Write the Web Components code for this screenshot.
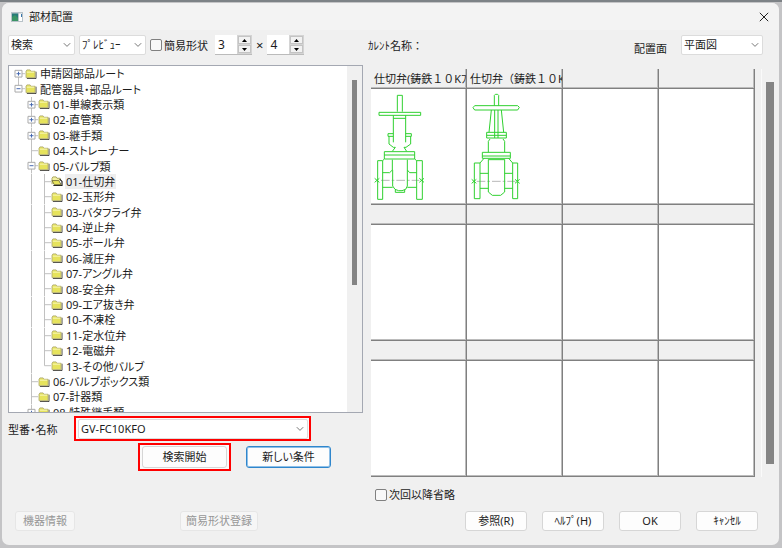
<!DOCTYPE html>
<html lang="ja">
<head>
<meta charset="utf-8">
<title>部材配置</title>
<style>
html, body { margin: 0; height: 100%; }
body {
  background: linear-gradient(#7d8286 0 2px, #c4c4c6 2px);
  font: 11px/15px "Noto Sans", "Noto Sans CJK JP", sans-serif;
  color: #1c1c1c;
  overflow: hidden;
}
</style>
</head>
<body>
<part-dialog></part-dialog>
<script>
const define = (name, html, setup) => customElements.define(name, class extends HTMLElement {
  connectedCallback() {
    if (this.shadowRoot) return;
    const root = this.attachShadow({ mode: 'open' });
    const t = document.createElement('template');
    t.innerHTML = '<style>*{box-sizing:border-box}:host{box-sizing:border-box}</style>' + html;
    root.append(t.content.cloneNode(true));
    if (setup) setup(this, root);
  }
});

define('push-button', `
<style>
:host { display: inline-flex; height: 20px; }
button { flex: 1; font: inherit; color: inherit; padding: 0 4px; background: #fdfdfd; border: 1px solid #d6d6d6; border-radius: 3px; line-height: 16px; white-space: nowrap; font-feature-settings: inherit; }
button:disabled { color: #979797; background: #f6f6f6; border-color: #e6e6e6; }
:host([focused]) button { border: 1px solid #2f86cc; box-shadow: inset 0 0 0 1px #8fc0e8; }
</style>
<button type="button"><slot></slot></button>`,
(host, root) => { root.querySelector('button').disabled = host.hasAttribute('disabled'); });

define('combo-box', `
<style>
:host { display: inline-grid; height: 20px; }
select { grid-area: 1/1; width: 100%; min-width: 0; appearance: none; font: inherit; color: inherit; background: #fff; border: 1px solid #dcdcdc; border-radius: 2px; padding: 0 16px 0 2px; margin: 0; line-height: 16px; }
svg { grid-area: 1/1; justify-self: end; align-self: center; margin-right: 4px; pointer-events: none; fill: none; stroke: #777; }
</style>
<select></select>
<svg width="8" height="6" viewBox="0 0 8 6"><path d="M.8 1.2 4 4.4 7.2 1.2"/></svg>`,
(host, root) => {
  const s = root.querySelector('select');
  s.setAttribute('aria-label', host.getAttribute('label'));
  s.add(new Option(host.getAttribute('value')));
});

define('tick-box', `
<style>
:host { display: inline-flex; }
label { display: flex; align-items: center; gap: 2px; white-space: nowrap; }
input { appearance: none; width: 12px; height: 12px; margin: 0; border: 1px solid #808080; border-radius: 2px; background: #f8f8f8; }
</style>
<label><input type="checkbox"><span><slot></slot></span></label>`);

define('number-spinner', `
<style>
:host { display: inline-flex; height: 20px; width: 37px; background: #d4d4d4; border-bottom: 1px solid #bbb; }
input { flex: 1; min-width: 0; border: 0; margin: 0; padding: 0 0 0 3px; font: inherit; font-size: 12px; color: inherit; background: #fff; appearance: textfield; }
input::-webkit-inner-spin-button { display: none; }
div { display: grid; grid-template-rows: 1fr 1fr; gap: 1px; width: 15px; padding: 1px; }
button { display: grid; place-items: center; padding: 0; border: 1px solid #c4c4c4; background: #f2f2f2; }
svg { display: block; }
</style>
<input type="number">
<div>
<button type="button" aria-label="増やす"><svg width="5" height="3"><path d="M0 3 2.5 0 5 3z"/></svg></button>
<button type="button" aria-label="減らす"><svg width="5" height="3"><path d="M0 0 2.5 3 5 0z"/></svg></button>
</div>`,
(host, root) => {
  const i = root.querySelector('input');
  i.value = host.getAttribute('value');
  i.setAttribute('aria-label', host.getAttribute('label'));
  const [up, down] = root.querySelectorAll('button');
  up.onclick = () => i.stepUp();
  down.onclick = () => i.stepDown();
});

define('scroll-track', `
<style>
:host { display: grid; background: #f0f0f0; justify-items: center; }
i { background: #848484; }
</style><i></i>`,
(host, root) => {
  host.style.gridTemplateRows = host.getAttribute('parts');
  const i = root.querySelector('i');
  i.style.gridRow = 2;
  i.style.width = host.getAttribute('thumb') + 'px';
});

const guides = {
  b: '',
  l: '<path d="M6.5 0V16"/>',
  t: '<path d="M6.5 0V16M6.5 8H13"/>',
  e: '<path d="M6.5 0V8H13"/>',
  p: '<path d="M6.5 0V16M6.5 8H13"/><path class="box" d="M3 4.5h7v7h-7z"/><path class="sign" d="M4.5 8h4M6.5 6v4"/>',
  m: '<path d="M6.5 0V16M6.5 8H13"/><path class="box" d="M3 4.5h7v7h-7z"/><path class="sign" d="M4.5 8h4"/>',
  f: '<path d="M6.5 8V16M6.5 8H13"/><path class="box" d="M3 4.5h7v7h-7z"/><path class="sign" d="M4.5 8h4M6.5 6v4"/>',
  n: '<path d="M6.5 0V8H13"/><path class="box" d="M3 4.5h7v7h-7z"/><path class="sign" d="M4.5 8h4"/>'
};
define('tree-row', `
<style>
:host { display: flex; align-items: center; min-height: 15px; white-space: nowrap; font-feature-settings: "palt"; }
.g { display: flex; align-self: stretch; }
.g svg { width: 13px; height: 100%; fill: none; stroke: #c0c0c0; }
.g .box { fill: #fff; stroke: #a8a8a8; }
.g .sign { stroke: #4468b0; }
.f { width: 12px; height: 10px; margin-right: 2px; flex: none; }
span { padding: 0 1px; line-height: 15px; }
:host([aria-selected]) span { background: #eee; }
</style>
<div class="g"></div>
<svg class="f" viewBox="0 0 12 11"><path d="M1.5 10.5H11.5V3" fill="none" stroke="#333"/><path d="M.5 9.5V2.5L1.5 1H5L6 2.5H10.5V9.5Z" fill="#e6e35c" stroke="#b5b078"/><path d="M1.5 3.5H9.5" stroke="#fbfac0"/></svg>
<span><slot></slot></span>`,
(host, root) => {
  root.querySelector('.g').innerHTML = [...host.getAttribute('guides')]
    .map(c => `<svg viewBox="0 0 13 16" preserveAspectRatio="none">${guides[c]}</svg>`).join('');
  if (host.hasAttribute('aria-selected'))
    root.querySelector('.f').innerHTML = '<path d="M.5 9V2.5L1.5 1H5L6 2.5H9.5V5" fill="#f3f0a0" stroke="#a5a05a"/><path d="M9 3.5 11.5 6V10.5H2" fill="none" stroke="#222" stroke-width="1.3"/><path d="M.5 5H8L10.5 9.5H3Z" fill="#e6e35c" stroke="#77733a"/>';
});

const rows = [
  ['f', '申請図部品ルート'], ['n', '配管器具・部品ルート'],
  ['bp', '01-単線表示類'], ['bp', '02-直管類'], ['bp', '03-継手類'], ['bt', '04-ストレーナー'], ['bm', '05-バルブ類'],
  ['blt', '01-仕切弁', 1], ['blt', '02-玉形弁'], ['blt', '03-バタフライ弁'], ['blt', '04-逆止弁'], ['blt', '05-ボール弁'],
  ['blt', '06-減圧弁'], ['blt', '07-アングル弁'], ['blt', '08-安全弁'], ['blt', '09-エア抜き弁'], ['blt', '10-不凍栓'],
  ['blt', '11-定水位弁'], ['blt', '12-電磁弁'], ['ble', '13-その他バルブ'],
  ['bt', '06-バルブボックス類'], ['bt', '07-計器類'], ['bp', '08-特殊継手類']
];
define('part-tree', `
<style>
:host { display: flex; background: #fff; border: 1px solid #a4a8b2; overflow: hidden; }
.rows { flex: 1; display: grid; grid-auto-rows: 1fr; margin-bottom: -8px; padding-left: 3px; }
scroll-track { width: 15px; }
</style>
<div class="rows" role="tree">${rows.map(([g, t, s]) =>
  `<tree-row role="treeitem" aria-level="${g.length}" guides="${g}"${s ? ' aria-selected="true"' : ''}>${t}</tree-row>`).join('')}</div>
<scroll-track thumb="5" parts="14fr 204fr 127fr"></scroll-track>`);

define('preview-cell', `
<style>
:host { display: grid; grid-template-rows: subgrid; grid-row: span 2; min-width: 0; }
.cap, .pic { border-right: 1px solid #808080; border-bottom: 1px solid #808080; box-shadow: inset -1px -1px #bcbcbc; overflow: hidden; }
.cap { background: #f0f0f0; padding: 1px 0 0 3px; white-space: nowrap; line-height: 17px; }
.pic { background: #fff; }
</style>
<div class="cap"><slot></slot></div>
<div class="pic"><slot name="drawing"></slot></div>`);

define('valve-drawing', `
<style>
:host { display: block; }
svg { display: block; width: 96px; height: 115px; fill: none; stroke: #2fd02f; stroke-width: 3; }
.c { stroke: #b8b8b8; stroke-dasharray: 26 6 8 6; }
</style><svg></svg>`,
(host, root) => {
  const svg = root.querySelector('svg');
  if (host.getAttribute('kind') === 'screw') {
    svg.setAttribute('viewBox', '15 75 288 345');
    svg.innerHTML = `<path class="c" d="M45 349H160"/>
<path d="M94 143V94H109V143M39 145H164V154H39ZM82 154V235M119 154V235M82 163H119
M82 209H66V217H82M119 209H136V217H119M69 217V240L82 250H88L79 262M134 217V240L120 250H114L122 262
M55 263H146V285H55ZM55 273H146M55 285 50 290M146 285 152 290M35 290H50V406H35ZM152 290H169V406H152Z
M79 287V318L71 326H50M124 287V318L131 326H152M80 318V366L87 376 98 380H108L119 376 124 366V318
M50 370H80M124 370H152M88 377V385H116V377M26 343 40 355M40 343 26 355M160 343 174 355M174 343 160 355"/>`;
  } else {
    svg.setAttribute('viewBox', '21 75 288 345');
    svg.innerHTML = `<path class="c" d="M50 352H166"/>
<path d="M103 125V94L106 91H113L116 94V125M44 125H173L178 130 173 138H44L39 131ZM94 138 87 205M124 138 131 205M104 138V222M114 138V222
M80 205H139V222H80ZM80 214H139M90 225 85 232V265M129 225 134 232V265M67 265H151V283H67ZM67 276H151M72 283 60 297M146 283 158 297
M85 286V384L97 394H122L134 384V286M85 287H134M43 297H60V404H43ZM158 297H173V404H158Z
M60 328H85M134 328H158M60 373H85M134 373H158M35 346 49 358M49 346 35 358M165 346 179 358M179 346 165 358"/>`;
  }
});

define('preview-grid', `
<style>
:host { display: grid; grid-template-columns: repeat(4, 1fr); grid-template-rows: repeat(3, 20fr 116fr); }
</style>
<preview-cell>仕切弁(鋳鉄１０Kﾌ<valve-drawing slot="drawing" kind="screw"></valve-drawing></preview-cell>
<preview-cell>仕切弁（鋳鉄１０K<valve-drawing slot="drawing" kind="yoke"></valve-drawing></preview-cell>
${'<preview-cell></preview-cell>'.repeat(10)}`);

define('title-bar', `
<style>
:host { display: flex; align-items: center; gap: 6px; height: 27px; padding: 0 10px 0 9px; background: #f3f3f3; }
h1 { flex: 1; font: inherit; margin: 0; }
button { display: grid; padding: 0; border: 0; background: none; }
</style>
<svg width="12" height="10" viewBox="0 0 12 10"><path d="M0 0H12V10H0Z" fill="#b8c2c8"/><path d="M1 1.5H7V9H1Z" fill="#277b78"/><path d="M1 5 4 3 7 6V9H1Z" fill="#3b9465"/><path d="M8 1.5H11V9H8Z" fill="#fff"/><path d="M10.5 2V5" stroke="#3976aa"/></svg>
<h1><slot></slot></h1>
<button type="button" aria-label="閉じる"><svg width="10" height="10" fill="none" stroke="#222"><path d="M.8.8 9.2 9.2M9.2.8.8 9.2"/></svg></button>`);

define('part-dialog', `
<style>
:host { display: flex; flex-direction: column; height: 100vh; padding: 3px 3px 3px 2px; }
section { flex: 1; min-height: 0; display: flex; flex-direction: column; background: #f0f0f0; border-radius: 7px; overflow: hidden; }
main { flex: 1; min-height: 0; display: grid; grid-template-columns: 355fr 406fr; gap: 8px; padding: 5px 2px 0 6px; }
.col { display: flex; flex-direction: column; min-width: 0; min-height: 0; }
.bar { display: flex; align-items: center; gap: 4px; height: 20px; white-space: nowrap; }
.short { width: 67px; }
.bar tick-box { margin-right: 3px; }
.times { font-size: 13px; }
part-tree { flex: 1; min-height: 0; margin-top: 10px; }
.form { display: flex; align-items: center; margin-top: 3px; gap: 16px; }
.form label { width: 50px; white-space: nowrap; padding-top: 2px; font-feature-settings: "palt"; }
.hot { display: inline-flex; border: 2px solid #f00; background: #fafafa; }
.form .hot { width: 237px; padding: 1px 1px 2px 2px; height: 25px; }
.form combo-box { flex: 1; }
.go { display: flex; align-items: center; gap: 15px; margin: 2px 0 35px 130px; height: 28px; font-feature-settings: "palt"; }
.go .hot { padding: 1px 2px; }
.go push-button { width: 85px; height: 22px; }
.right .bar { padding-right: 14px; }
.name { flex: 1; margin-left: -3px; }
.face { margin: 6px 10px 0 0; }
.plane { width: 82px; }
.view { flex: 1; min-height: 0; display: flex; margin-top: 14px; }
preview-grid { flex: 1; }
.view scroll-track { width: 16px; margin-left: 6px; border-left: 1px solid #fafafa; }
.skip { margin: 10px 0 4px 4px; }
footer { display: flex; justify-content: space-between; padding: 5px 21px 14px 13px; font-feature-settings: "palt"; }
footer div { display: flex; gap: 15px; }
footer .l { gap: 105px; }
.r push-button { width: 62px; }
.l push-button { width: 60px; }
.l push-button + push-button { width: 78px; }
</style>
<section>
<title-bar>部材配置</title-bar>
<main>
<div class="col">
  <div class="bar">
    <combo-box class="short" label="モード" value="検索"></combo-box>
    <combo-box class="short" label="表示" value="ﾌﾟﾚﾋﾞｭｰ"></combo-box>
    <tick-box>簡易形状</tick-box>
    <number-spinner label="列数" value="3"></number-spinner>
    <span class="times">×</span>
    <number-spinner label="行数" value="4"></number-spinner>
  </div>
  <part-tree></part-tree>
  <div class="form"><label>型番・名称</label><div class="hot"><combo-box label="型番・名称" value="GV-FC10KFO"></combo-box></div></div>
  <div class="go"><div class="hot"><push-button>検索開始</push-button></div><push-button focused>新しい条件</push-button></div>
</div>
<div class="col right">
  <div class="bar"><span class="name">ｶﾚﾝﾄ名称：</span><span class="face">配置面</span><combo-box class="plane" label="配置面" value="平面図"></combo-box></div>
  <div class="view"><preview-grid></preview-grid><scroll-track thumb="8" parts="13fr 382fr 13fr"></scroll-track></div>
  <tick-box class="skip">次回以降省略</tick-box>
</div>
</main>
<footer>
  <div class="l"><push-button disabled>機器情報</push-button><push-button disabled>簡易形状登録</push-button></div>
  <div class="r"><push-button>参照(R)</push-button><push-button>ﾍﾙﾌﾟ(H)</push-button><push-button>OK</push-button><push-button>ｷｬﾝｾﾙ</push-button></div>
</footer>
</section>`);
</script>
</body>
</html>
